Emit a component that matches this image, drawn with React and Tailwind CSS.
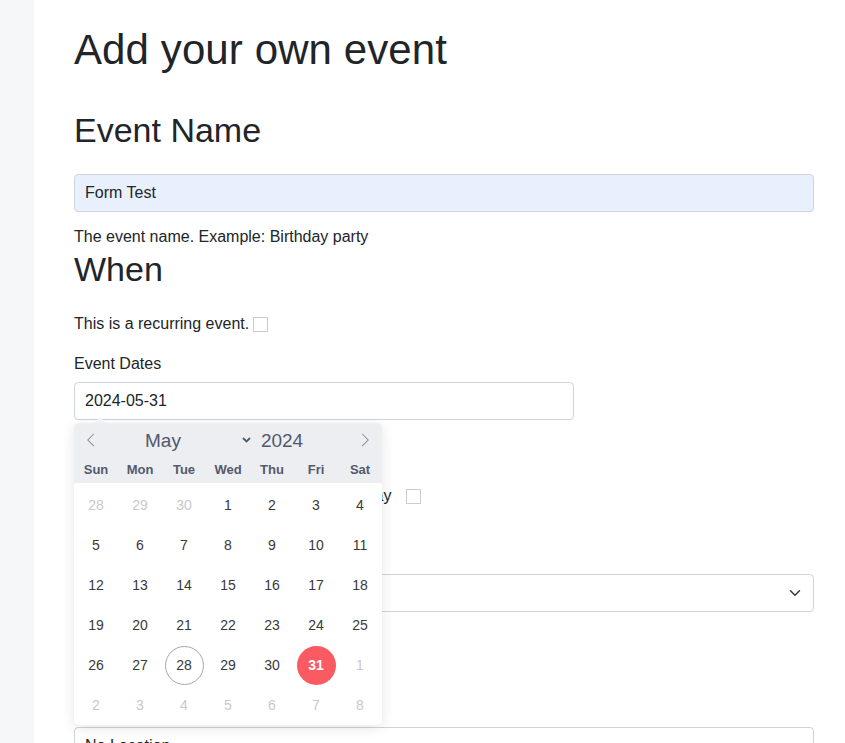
import { useState } from 'react'

const WEEKDAYS = ['Sun', 'Mon', 'Tue', 'Wed', 'Thu', 'Fri', 'Sat']

// May 2024 grid, with the trailing/leading days of the neighbouring months
const DAYS = [
  ...[28, 29, 30].map((d) => ({ d, off: true })),
  ...Array.from({ length: 31 }, (_, i) => ({ d: i + 1 })),
  ...[1, 2, 3, 4, 5, 6, 7, 8].map((d) => ({ d, off: true })),
]

function Calendar() {
  return (
    <div className="absolute left-0 top-[41px] z-10 w-[308px] rounded-[5px] bg-white shadow-[0_3px_13px_rgba(0,0,0,0.1)]">
      <span className="absolute left-[20px] top-[-6px] h-0 w-0 border-x-[6px] border-b-[6px] border-x-transparent border-b-[#f1f2f5]" />
      <div className="rounded-t-[5px] bg-[#eceef1]">
        <div className="flex h-[34px] items-center text-[19px] text-[#50596c]">
          <span className="flex h-[34px] w-[34px] items-center justify-center">
            <svg viewBox="0 0 17 17" className="size-[14px] fill-[#7d828c]">
              <path d="M5.207 8.471l7.146 7.147-0.707 0.707-7.853-7.854 7.854-7.853 0.707 0.707-7.147 7.146z" />
            </svg>
          </span>
          <span className="ml-[37px] leading-none">May</span>
          <svg viewBox="0 0 9 6" className="ml-[61px] h-[6px] w-[9px]">
            <path d="M1 1l3.5 3.5L8 1" fill="none" stroke="#50596c" strokeWidth="1.8" />
          </svg>
          <span className="ml-[10px] leading-none">2024</span>
          <span className="ml-auto flex h-[34px] w-[34px] items-center justify-center">
            <svg viewBox="0 0 17 17" className="size-[14px] fill-[#7d828c]">
              <path d="M13.207 8.472l-7.854 7.854-0.707-0.707 7.146-7.146-7.146-7.148 0.707-0.707 7.854 7.854z" />
            </svg>
          </span>
        </div>
        <div className="grid h-[26px] grid-cols-7 items-center text-center text-[13px] font-bold text-[#545a69]">
          {WEEKDAYS.map((w) => (
            <span key={w}>{w}</span>
          ))}
        </div>
      </div>
      <div className="grid grid-cols-7 pt-[2px] text-[14px]">
        {DAYS.map(({ d, off }, i) => {
          const today = !off && d === 28
          const picked = !off && d === 31
          return (
            <div key={i} className="flex h-[40px] items-center justify-center">
              <span
                className={`flex size-[39px] items-center justify-center rounded-full ${
                  picked
                    ? 'bg-[#fa5b63] font-bold text-white'
                    : today
                      ? 'border border-[#a3a9b1] text-[#393939]'
                      : off
                        ? 'text-[#c9c9c9]'
                        : 'text-[#393939]'
                }`}
              >
                {d}
              </span>
            </div>
          )
        })}
      </div>
    </div>
  )
}

function Checkbox({ className = '' }) {
  return <span className={`inline-block size-[15px] border border-[#cccccc] bg-white ${className}`} />
}

export default function App() {
  const [name, setName] = useState('Form Test')

  return (
    <div className="flex min-h-[743px] bg-white font-['Liberation_Sans',Arial,sans-serif] text-[16px] text-[#212529]">
      <aside className="w-[34px] shrink-0 bg-[#f6f7f9]" />

      <main className="flex-1 pb-10 pl-[40px] pr-[31px] pt-[26px]">
        <h1 className="text-[42px] font-normal leading-[48px] tracking-[0.1px]">Add your own event</h1>

        <h2 className="mt-[36px] text-[34px] leading-[41px]">Event Name</h2>
        <input
          value={name}
          onChange={(e) => setName(e.target.value)}
          className="mt-[23px] block h-[38px] w-full rounded-[4px] border border-[#ced4da] bg-[#e8f0fe] px-[10px] text-[16px] outline-none"
        />
        <p className="mt-[13px] leading-6">The event name. Example: Birthday party</p>

        <h2 className="text-[34px] leading-[41px]">When</h2>
        <div className="mt-[22px] flex items-center leading-6">
          <span>This is a recurring event.</span>
          <Checkbox className="ml-[4px]" />
        </div>

        <p className="mt-[16px] leading-6">Event Dates</p>
        <div className="relative mt-[6px] w-[500px]">
          <input
            readOnly
            value="2024-05-31"
            className="block h-[38px] w-full rounded-[4px] border border-[#ced4da] bg-white px-[10px] text-[16px] outline-none"
          />
          <Calendar />
        </div>

        <div className="mt-[64px] flex items-center leading-6">
          <span className="tracking-[0.15px]">This event takes place during the whole day</span>
          <Checkbox className="ml-[14px]" />
        </div>

        <p className="mt-[35px] leading-6">Timezone</p>
        <div className="mt-[7px] flex h-[38px] w-full items-center justify-between rounded-[4px] border border-[#ced4da] bg-white pl-[10px] pr-[11px]">
          <span>Europe/London</span>
          <svg viewBox="0 0 16 16" className="h-[12px] w-[14px]">
            <path d="m2 5 6 6 6-6" fill="none" stroke="#343a40" strokeWidth="2" strokeLinecap="round" strokeLinejoin="round" />
          </svg>
        </div>

        <h2 className="mt-[24px] text-[34px] leading-[41px]">Where</h2>
        <p className="mt-[19px] leading-6">Location</p>
        <input
          readOnly
          value="No Location"
          className="mt-[7px] block h-[38px] w-full rounded-[4px] border border-[#ced4da] bg-white px-[10px] text-[16px] outline-none"
        />
      </main>
    </div>
  )
}
